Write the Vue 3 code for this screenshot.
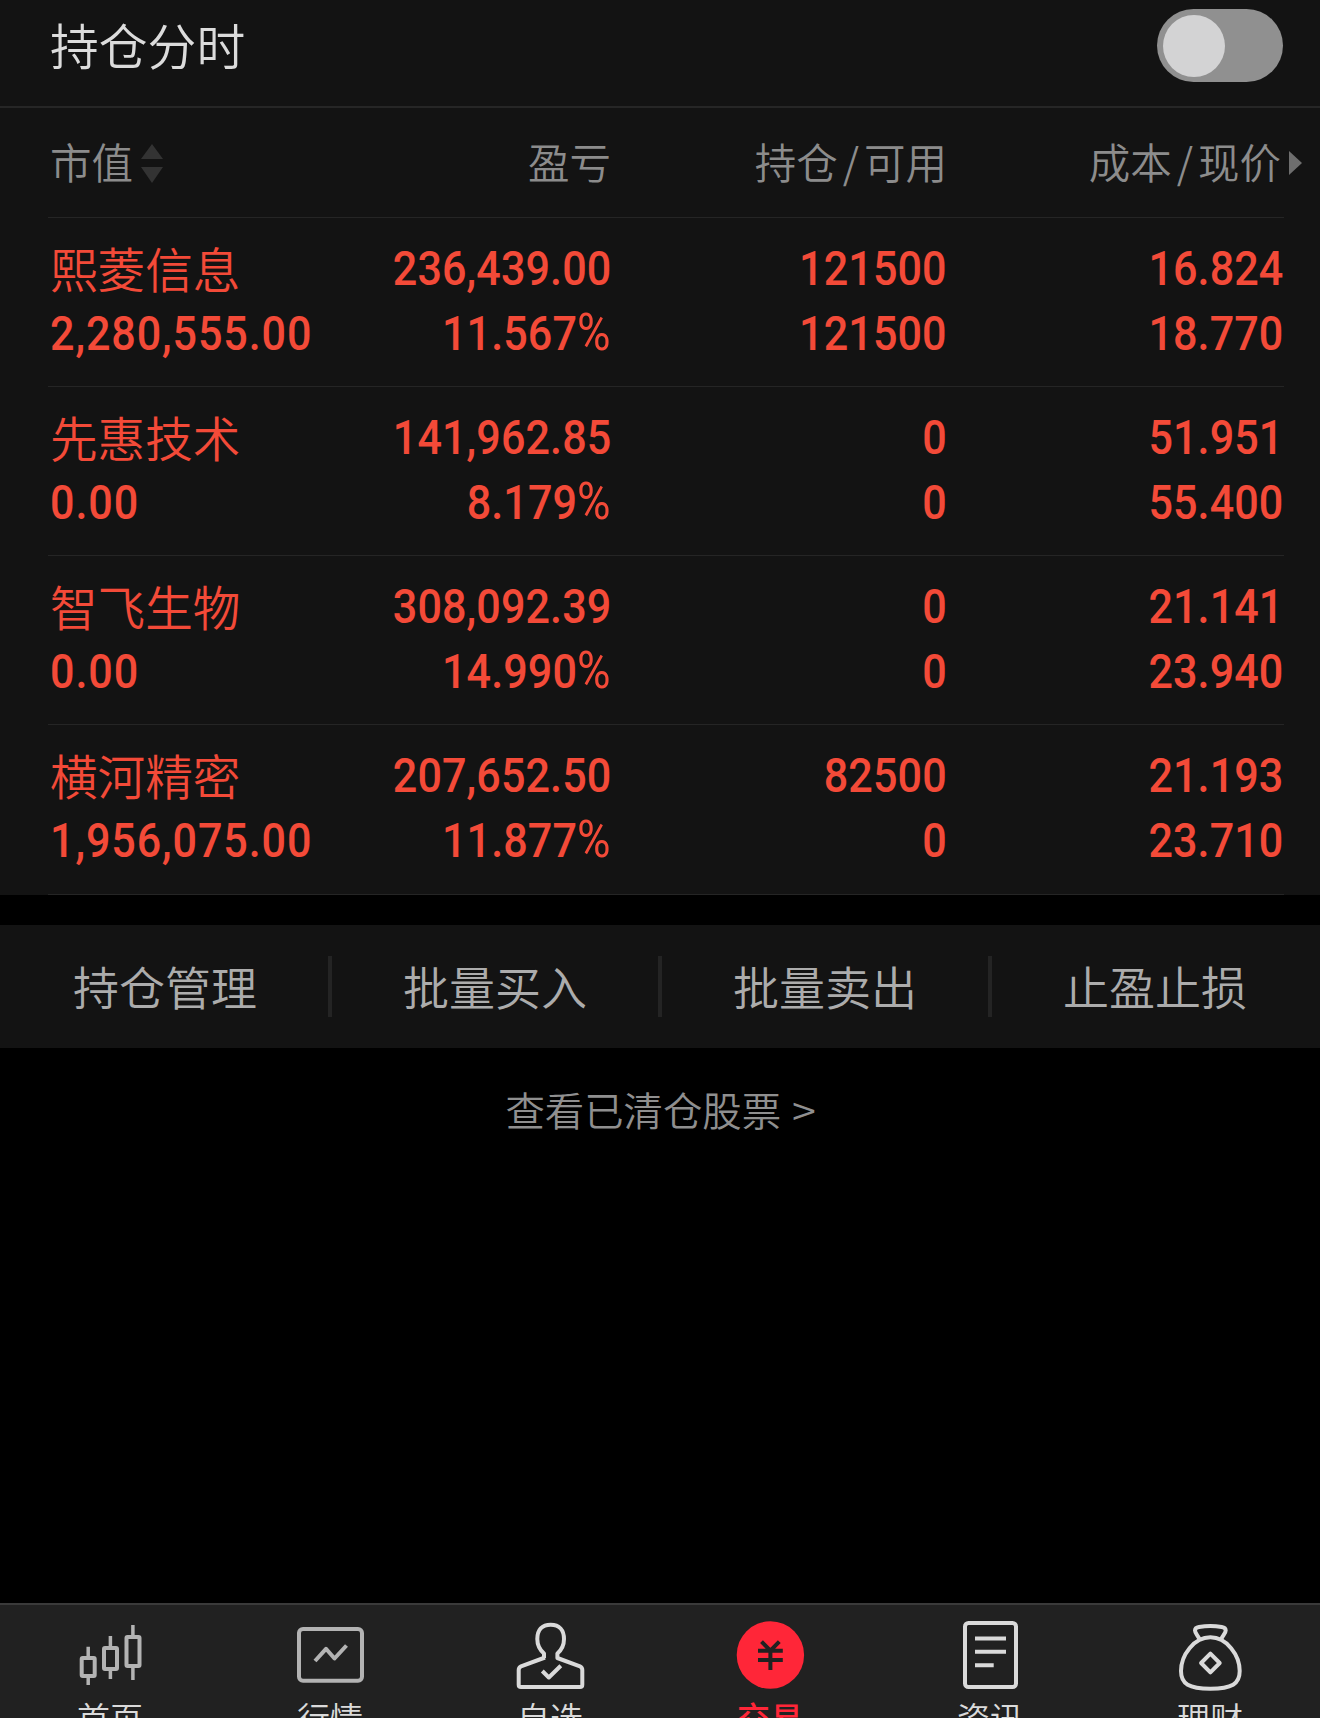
<template>
  <div class="page">
    <section class="holdings">
      <div class="title-bar">
        <h1 class="title">持仓分时</h1>
        <button class="switch" role="switch" aria-checked="false" aria-label="持仓分时">
          <span class="knob"></span>
        </button>
      </div>

      <div class="table-head">
        <div class="head-cell sortable">
          市值
          <span class="sort">
            <i class="arrow-up"></i>
            <i class="arrow-down"></i>
          </span>
        </div>
        <div class="head-cell">盈亏</div>
        <div class="head-cell">持仓<span class="slash">/</span>可用</div>
        <div class="head-cell">成本<span class="slash">/</span>现价<i class="arrow-right"></i></div>
      </div>

      <div v-for="stock in stocks" :key="stock.name" class="row">
        <div class="cell first">
          <span class="name">{{ stock.name }}</span>
          <span class="num wide">{{ stock.value }}</span>
        </div>
        <div class="cell">
          <span class="num">{{ stock.profit }}</span>
          <span class="num">{{ stock.rate }}<span class="percent">%</span></span>
        </div>
        <div class="cell">
          <span class="num">{{ stock.amount }}</span>
          <span class="num">{{ stock.usable }}</span>
        </div>
        <div class="cell">
          <span class="num">{{ stock.cost }}</span>
          <span class="num">{{ stock.price }}</span>
        </div>
      </div>
    </section>

    <nav class="actions">
      <button v-for="action in actions" :key="action" class="action">{{ action }}</button>
    </nav>

    <a class="cleared">查看已清仓股票 <span class="more">&gt;</span></a>

    <nav class="tabbar">
      <a v-for="tab in tabs" :key="tab.id" class="tab" :class="[tab.id, { active: tab.id === current }]">
        <svg v-if="tab.id === 'home'" class="icon" viewBox="0 0 72 72">
          <rect x="7.7" y="38" width="13" height="18" rx="1" />
          <rect x="30" y="28" width="13" height="21" rx="1" />
          <rect x="52.5" y="17" width="13" height="29" rx="1" />
          <path class="wick" d="M14.2 26.7V37M14.2 57V65M36.4 16V27M36.4 50V59M58.9 5V16M58.9 47V60" />
        </svg>
        <svg v-else-if="tab.id === 'quote'" class="icon" viewBox="0 0 72 72">
          <rect x="5" y="9" width="63" height="51.7" rx="4" />
          <polyline points="21,41 32,28.8 40.5,38.5 52.5,25.5" />
        </svg>
        <svg v-else-if="tab.id === 'watch'" class="icon" viewBox="0 0 72 72">
          <path d="M30 38V33.5C26 30 23.3 25 23.3 19C23.3 10 28 4.7 36.7 4.7S50 10 50 19C50 25 47.5 30 43.4 33.5V38L66 46.3Q68.3 47.3 68.3 50V64.7Q68.3 67 66 67H7Q4.7 67 4.7 64.7V50Q4.7 47.3 7 46.3L31 37.5" />
          <path d="M28.3 51L34.8 57.5L46.8 45.8" />
        </svg>
        <svg v-else-if="tab.id === 'trade'" class="icon" viewBox="0 0 72 72">
          <circle class="coin" cx="36.4" cy="35" r="33.7" />
          <path class="yen" d="M27.5 21.7L36.4 30.7L45.3 21.7M24 30.7H48.8M24 40H48.8M36.4 30V50" />
        </svg>
        <svg v-else-if="tab.id === 'news'" class="icon" viewBox="0 0 72 72">
          <rect x="11" y="3" width="51" height="64" rx="3.5" />
          <path d="M21 18.4H52M21 31.8H52M21 45.2H39.7" />
        </svg>
        <svg v-else class="icon" viewBox="0 0 72 72">
          <path d="M36.4 17.3C20 17.3 7 35 7 51C7 64 15 68.7 36.4 68.7S65.7 64 65.7 51C65.7 35 52.6 17.3 36.4 17.3Z" />
          <path d="M25.5 19C23.5 15 21 13 21 10.5Q21 7.7 25 7Q36.4 5.2 47.7 7Q51.7 7.7 51.7 10.5C51.7 13 49.3 15 47.2 19" />
          <path d="M36.4 33.7L45.7 43L36.4 52.3L27.1 43Z" />
        </svg>
        <span class="tab-label">{{ tab.label }}</span>
      </a>
    </nav>
  </div>
</template>

<script setup>
import { ref } from 'vue';

const stocks = [
  { name: '熙菱信息', value: '2,280,555.00', profit: '236,439.00', rate: '11.567', amount: '121500', usable: '121500', cost: '16.824', price: '18.770' },
  { name: '先惠技术', value: '0.00', profit: '141,962.85', rate: '8.179', amount: '0', usable: '0', cost: '51.951', price: '55.400' },
  { name: '智飞生物', value: '0.00', profit: '308,092.39', rate: '14.990', amount: '0', usable: '0', cost: '21.141', price: '23.940' },
  { name: '横河精密', value: '1,956,075.00', profit: '207,652.50', rate: '11.877', amount: '82500', usable: '0', cost: '21.193', price: '23.710' }
];

const actions = ['持仓管理', '批量买入', '批量卖出', '止盈止损'];

const tabs = [
  { id: 'home', label: '首页' },
  { id: 'quote', label: '行情' },
  { id: 'watch', label: '自选' },
  { id: 'trade', label: '交易' },
  { id: 'news', label: '资讯' },
  { id: 'wealth', label: '理财' }
];

const current = ref('trade');
</script>

<style>
body {
  margin: 0;
  background: #000;
}
</style>

<style scoped>
.page {
  display: flex;
  flex-direction: column;
  height: 1718px;
  overflow: hidden;
  background: #000;
  font-family: "Noto Sans CJK SC", sans-serif;
  font-weight: 350;
}

button {
  padding: 0;
  border: none;
  background: none;
  font: inherit;
  color: inherit;
}

.holdings {
  height: 895px;
  background: #131313;
}

.title-bar {
  box-sizing: border-box;
  display: flex;
  justify-content: space-between;
  height: 108px;
  padding: 9px 37px 0 50px;
  border-bottom: 2px solid #262626;
}

.title {
  margin: 0;
  font-size: 48.8px;
  font-weight: 350;
  line-height: 70px;
  color: #dcdcdc;
}

.switch {
  box-sizing: border-box;
  display: flex;
  align-items: center;
  width: 126px;
  height: 73px;
  padding-left: 6px;
  border-radius: 37px;
  background: #909090;
}

.knob {
  width: 62px;
  height: 62px;
  border-radius: 50%;
  background: #d3d3d4;
}

.table-head,
.row {
  box-sizing: border-box;
  display: grid;
  grid-template-columns: 280px 281px 336px 336px;
  width: 1236px;
  margin-left: 48px;
  padding-left: 2px;
  border-bottom: 1px solid #252525;
}

.table-head {
  height: 110px;
  line-height: 107px;
  font-size: 41.5px;
  color: #8c8c8c;
}

.head-cell {
  display: flex;
  justify-content: flex-end;
  height: 107px;
  white-space: nowrap;
}

.head-cell.sortable {
  justify-content: flex-start;
}

.slash {
  margin: 0 5px;
}

.sort {
  display: flex;
  flex-direction: column;
  gap: 8px;
  margin-left: 8px;
  padding-top: 36px;
}

.arrow-up,
.arrow-down {
  border-left: 11px solid transparent;
  border-right: 11px solid transparent;
}

.arrow-up {
  border-bottom: 15px solid #333;
}

.arrow-down {
  border-top: 16px solid #333;
}

.arrow-right {
  align-self: flex-start;
  margin-top: 43px;
  margin-left: 8px;
  margin-right: -19px;
  border-top: 12px solid transparent;
  border-bottom: 12px solid transparent;
  border-left: 13px solid #6e6e6e;
}

.row {
  height: 169px;
  padding-top: 17px;
  color: #f34a38;
}

.row:last-child {
  height: 170px;
}

.cell {
  display: flex;
  flex-direction: column;
  align-items: flex-end;
}

.cell.first {
  align-items: flex-start;
}

.name {
  height: 65px;
  font-size: 47.6px;
  line-height: 65px;
}

/* condensed figures */
.num {
  height: 65px;
  font-family: Roboto, sans-serif;
  font-size: 49px;
  font-weight: 500;
  line-height: 67px;
  letter-spacing: 0.1px;
  white-space: nowrap;
  transform: scaleX(0.88);
  transform-origin: right center;
}

.num.wide {
  letter-spacing: 1px;
  transform-origin: left center;
}

.percent {
  font-size: 52px;
  font-weight: 400;
  line-height: 1;
}

.actions {
  display: grid;
  grid-template-columns: repeat(4, 1fr);
  align-items: center;
  height: 123px;
  margin-top: 30px;
  background: #131313;
}

.action {
  position: relative;
  height: 62px;
  padding-bottom: 3px;
  font-size: 46px;
  line-height: 58px;
  color: #acacac;
}

.action + .action::before {
  content: '';
  position: absolute;
  left: -2px;
  top: 0;
  width: 4px;
  height: 61px;
  background: #242424;
}

.cleared {
  margin-top: 31px;
  font-size: 39.4px;
  line-height: 60px;
  text-align: center;
  color: #8f8f8f;
}

.more {
  display: inline-block;
  margin-left: 3px;
  transform: scaleX(1.1);
}

.tabbar {
  box-sizing: border-box;
  display: grid;
  grid-template-columns: repeat(6, 1fr);
  flex: none;
  height: 155px;
  margin-top: auto;
  margin-bottom: -40px;
  border-top: 2px solid #3a3a3a;
  background: #212121;
}

.tab {
  display: flex;
  flex-direction: column;
  align-items: center;
  padding-top: 15px;
  color: #dadada;
}

.tab.active {
  color: #ff2638;
}

.icon {
  width: 72px;
  height: 72px;
  fill: none;
  stroke: currentColor;
  stroke-width: 4;
  stroke-linejoin: round;
}

.home .icon,
.quote .icon {
  color: #b3b3b3;
}

.wick {
  stroke-width: 3.5;
}

.coin {
  fill: currentColor;
  stroke: none;
}

.yen {
  stroke: #212121;
  stroke-linejoin: miter;
}

.tab-label {
  margin-top: 1px;
  font-size: 33px;
  line-height: 48px;
}

.active .tab-label {
  font-weight: 500;
}
</style>
